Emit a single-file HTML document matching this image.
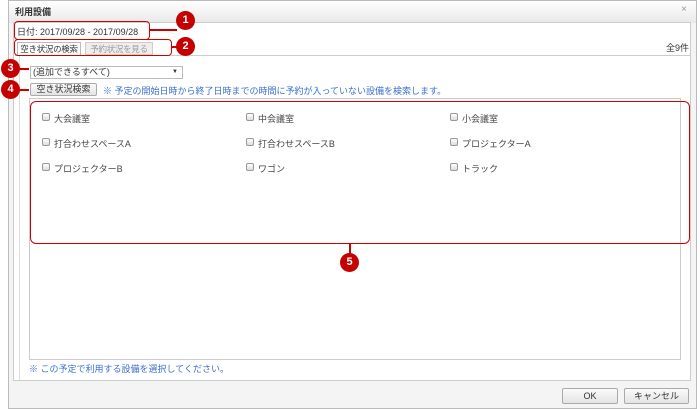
<!DOCTYPE html>
<html><head><meta charset="utf-8"><style>
*{box-sizing:border-box;margin:0;padding:0}
body{width:700px;height:409px;background:#fff;font-family:"Liberation Sans","Noto Sans CJK JP",sans-serif;font-size:9px;color:#333;position:relative;overflow:hidden}
div{white-space:nowrap}
.a{position:absolute}
.circ{position:absolute;width:19px;height:19px;border-radius:50%;background:#c40000;color:#fff;font-size:11px;font-weight:bold;text-align:center;line-height:19px}
.rb{position:absolute;border:1.5px solid #d00000;border-radius:4px}
.rl{position:absolute;background:#d00000}
.cb{position:absolute;width:8px;height:8px;border:1px solid #999;border-radius:2px;background:linear-gradient(#fff,#ddd)}
.lb{position:absolute;font-size:9px;color:#444}
.btn{position:absolute;border:1px solid #aaa;border-radius:2px;background:linear-gradient(#fafafa,#e4e4e4);text-align:center;font-size:9px;color:#333}
</style></head><body>
<div class="a" style="left:8px;top:0;width:689px;height:409px;border:1px solid #bbb;background:linear-gradient(#fff,#e9e9e9 22px,#f4f4f4 22px)"></div>
<div class="a" style="left:15px;top:5px;font-size:9px;font-weight:bold;color:#333">利用設備</div>
<div class="a" style="left:681px;top:4px;color:#999;font-size:10px">×</div>
<div class="a" style="left:13px;top:22px;width:678px;height:359px;border:1px solid #ccc;background:#fff"></div>
<div class="a" style="left:17px;top:25px">日付: 2017/09/28 - 2017/09/28</div>
<div class="a" style="left:17px;top:42px;width:64px;height:14px;border:1px solid #bbb;border-bottom:none;background:#fff;text-align:center;line-height:13px;font-size:8.5px;letter-spacing:-0.3px">空き状況の検索</div>
<div class="a" style="left:85px;top:42px;width:68px;height:13px;border:1px solid #ccc;background:#eee;color:#999;text-align:center;line-height:12px;font-size:8.5px;letter-spacing:-0.3px">予約状況を見る</div>
<div class="a" style="left:15px;top:55px;width:675px;border-top:1px solid #ccc"></div>
<div class="a" style="left:666px;top:41px">全9件</div>
<div class="a" style="left:19px;top:56px;width:1px;height:324px;background:#ddd"></div>
<div class="a" style="left:30px;top:66px;width:153px;height:13px;border:1px solid #bbb;padding-left:2px;line-height:11px">(追加できるすべて)<span style="position:absolute;right:4px;font-size:6px">▼</span></div>
<div class="btn" style="left:30px;top:83px;width:67px;height:13px;line-height:11px">空き状況検索</div>
<div class="a" style="left:103px;top:84px;color:#3a6fd0">※ 予定の開始日時から終了日時までの時間に予約が入っていない設備を検索します。</div>
<div class="a" style="left:29px;top:98px;width:652px;height:262px;border:1px solid #ccc"></div>
<div class="cb" style="left:42px;top:113px"></div><div class="lb" style="left:54px;top:112px">大会議室</div>
<div class="cb" style="left:246px;top:113px"></div><div class="lb" style="left:258px;top:112px">中会議室</div>
<div class="cb" style="left:450px;top:113px"></div><div class="lb" style="left:462px;top:112px">小会議室</div>
<div class="cb" style="left:42px;top:138px"></div><div class="lb" style="left:54px;top:137px">打合わせスペースA</div>
<div class="cb" style="left:246px;top:138px"></div><div class="lb" style="left:258px;top:137px">打合わせスペースB</div>
<div class="cb" style="left:450px;top:138px"></div><div class="lb" style="left:462px;top:137px">プロジェクターA</div>
<div class="cb" style="left:42px;top:163px"></div><div class="lb" style="left:54px;top:162px">プロジェクターB</div>
<div class="cb" style="left:246px;top:163px"></div><div class="lb" style="left:258px;top:162px">ワゴン</div>
<div class="cb" style="left:450px;top:163px"></div><div class="lb" style="left:462px;top:162px">トラック</div>
<div class="a" style="left:29px;top:362px;color:#3a6fd0">※ この予定で利用する設備を選択してください。</div>
<div class="btn" style="left:562px;top:388px;width:56px;height:16px;line-height:14px">OK</div>
<div class="btn" style="left:624px;top:388px;width:65px;height:16px;line-height:14px">キャンセル</div>
<div class="rb" style="left:14px;top:21px;width:136px;height:19px"></div>
<div class="rl" style="left:150px;top:29px;width:27px;height:1.5px"></div>
<div class="circ" style="left:176px;top:11px">1</div>
<div class="rb" style="left:14px;top:39px;width:158px;height:17px"></div>
<div class="rl" style="left:172px;top:46px;width:6px;height:1.5px"></div>
<div class="circ" style="left:176px;top:37px">2</div>
<div class="circ" style="left:1px;top:59px">3</div>
<div class="rl" style="left:18px;top:68px;width:11px;height:1.5px"></div>
<div class="circ" style="left:1px;top:80px">4</div>
<div class="rl" style="left:18px;top:89px;width:11px;height:1.5px"></div>
<div class="rb" style="left:30px;top:101px;width:660px;height:143px;border-radius:6px"></div>
<div class="rl" style="left:349px;top:244px;width:1.5px;height:10px"></div>
<div class="circ" style="left:340px;top:253px">5</div>
</body></html>
